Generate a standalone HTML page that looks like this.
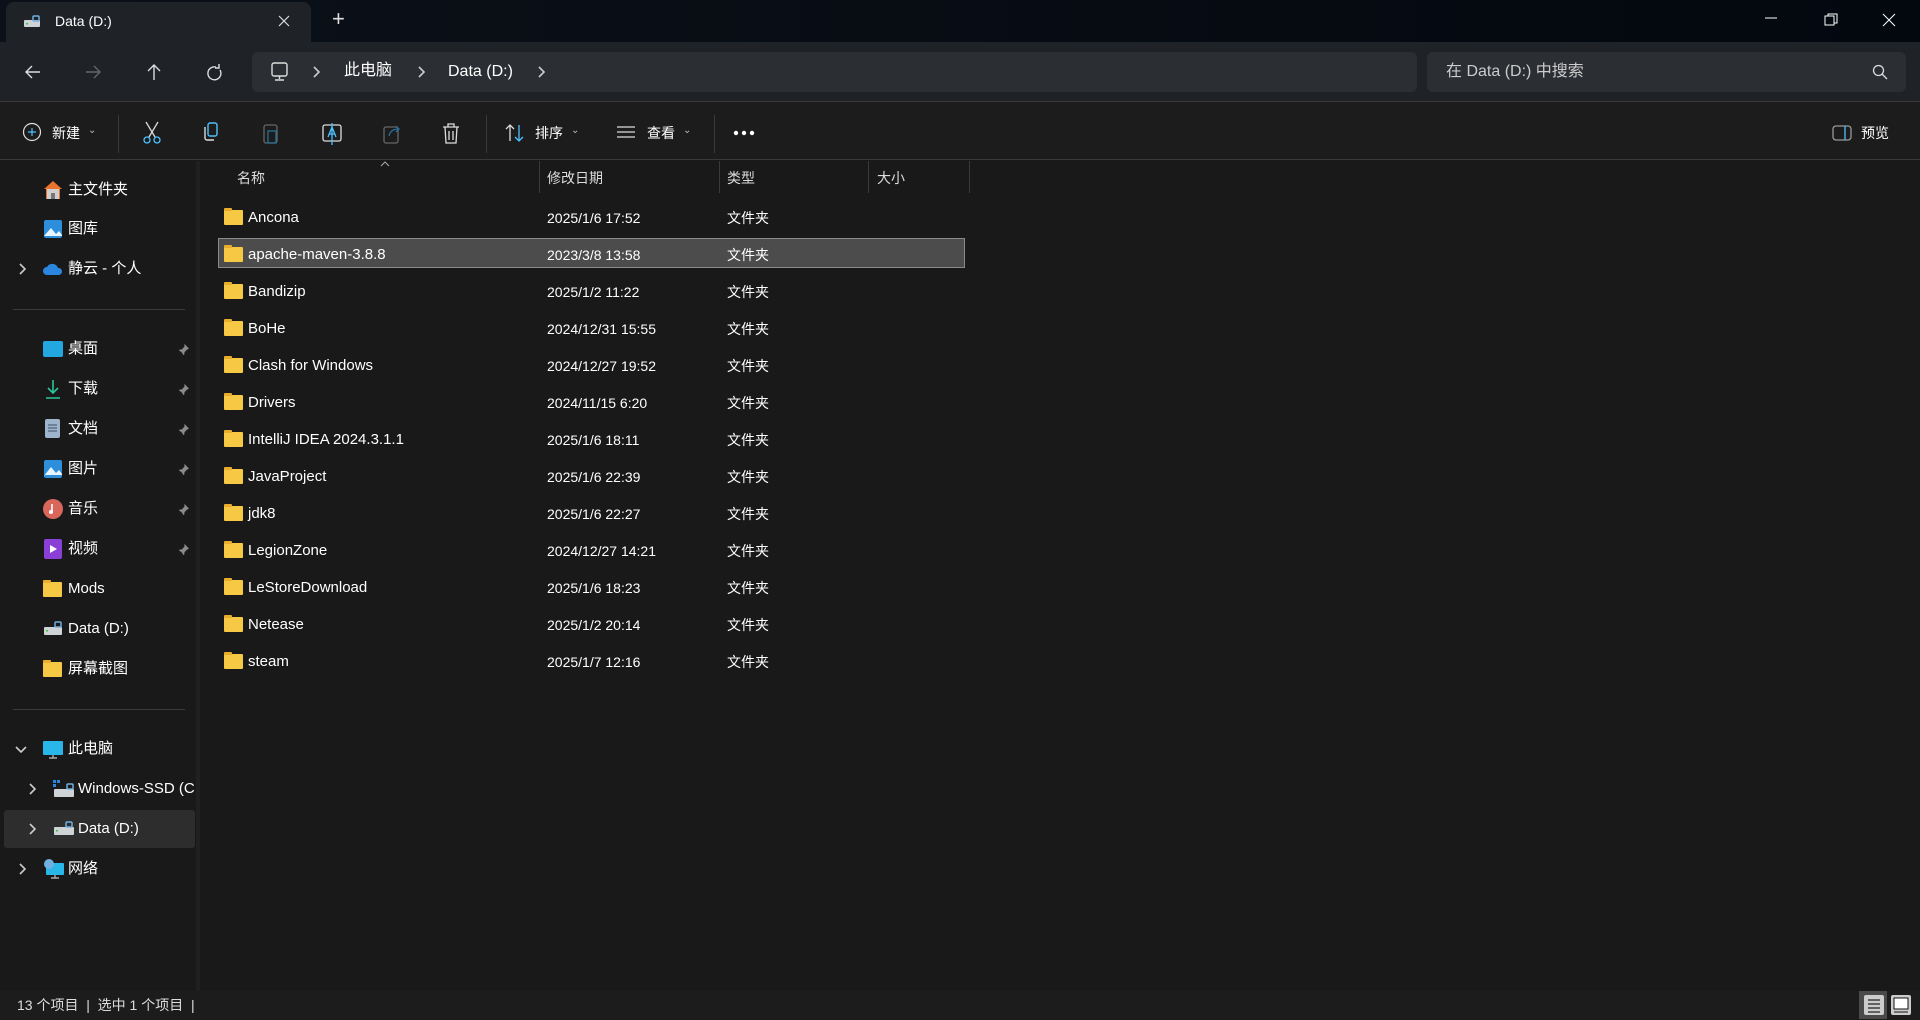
<!DOCTYPE html>
<html><head><meta charset="utf-8"><style>
*{margin:0;padding:0;box-sizing:border-box}
body{width:1920px;height:1020px;background:#191919;font-family:"Liberation Sans","Noto Sans CJK SC",sans-serif;color:#fff;position:relative;overflow:hidden;font-size:15px}
.abs{position:absolute}
.tabbar{left:0;top:0;width:1920px;height:42px;background:linear-gradient(90deg,#0c1119,#03080f)}
.tab{left:6px;top:2px;width:305px;height:40px;background:#1f2227;border-radius:8px 8px 0 0}
.addr{left:0;top:42px;width:1920px;height:60px;background:#1f2227;border-bottom:1px solid #3a3a3a}
.box{background:#2b2e33;border-radius:6px}
.tool{left:0;top:102px;width:1920px;height:58px;background:#1c1c1c;border-bottom:1px solid #3a3a3a}
.t{position:absolute;white-space:nowrap;line-height:20px}
.side{left:0;top:161px;width:196px;height:830px;background:#191919}
.split{left:196px;top:161px;width:4px;height:830px;background:#202020}
.status{left:0;top:991px;width:1920px;height:29px;background:#1c1c1c;color:#ddd;font-size:14px}
.fold{position:absolute;width:19px;height:15px;background:#f7c844;border-radius:1px}
.fold:before{content:"";position:absolute;left:0;top:-2px;width:8px;height:3px;background:#e8ad2a;border-radius:1px 1px 0 0}
.sep{position:absolute;width:1px;background:#3a3a3a}
</style></head><body>
<svg width="0" height="0" style="position:absolute"><defs>
<symbol id="pin" viewBox="0 0 14 14"><path d="M8 1l5 5-2 1-3 3 0 2-1 1-2-3-4 4 4-4-3-2 1-1h2l3-3z" fill="#8a8a8a"/></symbol>
<symbol id="chev" viewBox="0 0 10 14"><path d="M3 2l5 5-5 5" fill="none" stroke="#ccc" stroke-width="1.6"/></symbol>
</defs></svg>
<div class="abs tabbar"></div>
<div class="abs tab"></div>
<svg class="abs" style="left:23px;top:13px" width="18" height="16" viewBox="0 0 18 16"><rect x="1" y="7" width="16" height="7" rx="1" fill="#cfd3d8"/><rect x="10" y="3" width="6" height="5" rx="1" fill="none" stroke="#6fb0e0" stroke-width="1.5"/><rect x="3" y="10" width="2" height="1.5" fill="#3c3"/></svg>
<div class="t" style="left:55px;top:11px;font-size:14px">Data (D:)</div>
<svg class="abs" style="left:278px;top:15px" width="12" height="12" stroke="#ddd" stroke-width="1.2"><path d="M1 1l10 10M11 1L1 11"/></svg>
<div class="t" style="left:332px;top:9px;font-size:22px;color:#ddd;font-weight:300">+</div>
<svg class="abs" style="left:1762px;top:12px" width="150" height="16"><line x1="3" y1="6" x2="15" y2="6" stroke="#fff" stroke-width="1"/><rect x="63" y="4" width="9" height="9" fill="none" stroke="#fff"/><path d="M66 4V2h9v9h-3" fill="none" stroke="#fff"/><path d="M121 2l12 12M133 2l-12 12" stroke="#fff"/></svg>

<div class="abs addr"></div>
<svg class="abs" style="left:24px;top:62px" width="230" height="20" fill="none" stroke="#ddd" stroke-width="1.4"><path d="M2 10h14M8 4l-6 6 6 6"/><path d="M62 10h14M70 4l6 6-6 6" stroke="#666"/><path d="M130 3v15M124 9l6-6 6 6"/><path d="M192 5a6.5 6.5 0 1 0 4 3M195 2v4h-4"/></svg>
<div class="abs box" style="left:252px;top:52px;width:1165px;height:40px"></div>
<svg class="abs" style="left:270px;top:61px" width="20" height="22" fill="none" stroke="#ddd" stroke-width="1.4"><rect x="2" y="2" width="15" height="13" rx="2"/><path d="M9.5 15v3M5 19h9"/></svg>
<svg class="abs" style="left:311px;top:65px" width="10" height="14"><use href="#chev"/></svg>
<div class="t" style="left:344px;top:61px;font-size:16px">此电脑</div>
<svg class="abs" style="left:416px;top:65px" width="10" height="14"><use href="#chev"/></svg>
<div class="t" style="left:448px;top:62px;font-size:16px">Data (D:)</div>
<svg class="abs" style="left:536px;top:65px" width="10" height="14"><use href="#chev"/></svg>
<div class="abs box" style="left:1427px;top:52px;width:479px;height:40px"></div>
<div class="t" style="left:1446px;top:62px;font-size:16px;color:#ccc">在 Data (D:) 中搜索</div>
<svg class="abs" style="left:1872px;top:64px" width="16" height="16" fill="none" stroke="#ddd" stroke-width="1.3"><circle cx="6.5" cy="6.5" r="5"/><path d="M10 10l5 5"/></svg>

<div class="abs tool"></div>
<svg class="abs" style="left:22px;top:122px" width="20" height="20" fill="none" stroke="#ddd" stroke-width="1.2"><circle cx="10" cy="10" r="8.5"/><path d="M10 6v8M6 10h8" stroke="#4cc2ff"/></svg>
<div class="t" style="left:52px;top:123px;font-size:14px">新建</div><div class="t" style="left:88px;top:121px;font-size:10px;color:#bbb">⌄</div>
<div class="sep" style="left:118px;top:115px;height:38px"></div>
<svg class="abs" style="left:140px;top:120px" width="24" height="26" fill="none" stroke-width="1.3"><path d="M6 2l9 15M18 2l-9 15" stroke="#ddd"/><circle cx="7" cy="20" r="3" stroke="#4cc2ff"/><circle cx="17" cy="20" r="3" stroke="#4cc2ff"/></svg>
<svg class="abs" style="left:200px;top:122px" width="24" height="22" fill="none" stroke-width="1.4"><rect x="8" y="1" width="9" height="13" rx="2" stroke="#4cc2ff"/><path d="M5 5v11a2 2 0 0 0 2 2h7" stroke="#ddd"/></svg>
<svg class="abs" style="left:261px;top:122px" width="20" height="24" fill="none" stroke="#666" stroke-width="1.3"><rect x="3" y="3" width="13" height="18" rx="2"/><rect x="7" y="9" width="8" height="12" stroke="#2a6f98"/></svg>
<svg class="abs" style="left:321px;top:122px" width="24" height="24" fill="none" stroke-width="1.3"><rect x="2" y="3" width="18" height="16" rx="2" stroke="#ddd"/><path d="M7 15l4-10 4 10M8.5 12h5" stroke="#4cc2ff"/><path d="M11 1v22" stroke="#4cc2ff"/></svg>
<svg class="abs" style="left:381px;top:122px" width="24" height="24" fill="none" stroke="#666" stroke-width="1.3"><rect x="3" y="5" width="14" height="16" rx="2"/><path d="M8 14c1-5 5-7 10-7M15 4l3 3-3 3" stroke="#2a6f98"/></svg>
<svg class="abs" style="left:441px;top:122px" width="20" height="24" fill="none" stroke="#ddd" stroke-width="1.3"><path d="M2 5h16M7 5V2h6v3M4 5l1 16h10l1-16M8 9v9M12 9v9"/></svg>
<div class="sep" style="left:486px;top:115px;height:38px"></div>
<svg class="abs" style="left:504px;top:123px" width="22" height="20" fill="none" stroke-width="1.3"><path d="M6 18V2M2 6l4-4 4 4" stroke="#ddd"/><path d="M15 2v16M11 14l4 4 4-4" stroke="#4cc2ff"/></svg>
<div class="t" style="left:535px;top:123px;font-size:14px">排序</div><div class="t" style="left:571px;top:121px;font-size:10px;color:#bbb">⌄</div>
<svg class="abs" style="left:616px;top:125px" width="20" height="16" stroke="#ddd" stroke-width="1.3"><path d="M1 2h18M1 7h18M1 12h18"/></svg>
<div class="t" style="left:647px;top:123px;font-size:14px">查看</div><div class="t" style="left:683px;top:121px;font-size:10px;color:#bbb">⌄</div>
<div class="sep" style="left:714px;top:115px;height:38px"></div>
<svg class="abs" style="left:733px;top:130px" width="22" height="6" fill="#fff"><circle cx="3" cy="3" r="2.2"/><circle cx="11" cy="3" r="2.2"/><circle cx="19" cy="3" r="2.2"/></svg>
<svg class="abs" style="left:1832px;top:125px" width="20" height="16" fill="none" stroke-width="1.3"><rect x="1" y="1" width="18" height="14" rx="3" stroke="#999"/><path d="M13 1v14" stroke="#4cc2ff"/></svg>
<div class="t" style="left:1861px;top:123px;font-size:14px">预览</div>

<div class="abs side"></div>
<div class="abs split"></div>
<svg class="abs" style="left:43px;top:180px" width="20" height="20"><path d="M10 1L1 9h2v10h14V9h2z" fill="#e8742e"/><rect x="4" y="9" width="12" height="10" fill="#cfcfcf"/><rect x="8" y="13" width="4" height="6" fill="#777"/></svg>
<div class="t" style="left:68px;top:180px">主文件夹</div>
<svg class="abs" style="left:43px;top:219px" width="20" height="20"><rect x="1" y="1" width="18" height="18" rx="2" fill="#2d8fdc"/><path d="M1 17l7-8 5 6 3-3 3 4v1H1z" fill="#e8f4ff"/></svg>
<div class="t" style="left:68px;top:219px">图库</div>
<svg class="abs" style="left:17px;top:262px" width="10" height="14"><use href="#chev"/></svg>
<svg class="abs" style="left:43px;top:262px" width="20" height="14"><path d="M4 13a4 4 0 0 1 0-8 6 6 0 0 1 11 1 3.5 3.5 0 0 1 1 7z" fill="#2a86de"/></svg>
<div class="t" style="left:68px;top:259px">静云 - 个人</div>
<div class="abs" style="left:13px;top:309px;width:172px;height:1px;background:#3a3a3a"></div>
<svg class="abs" style="left:43px;top:341px" width="20" height="16"><rect x="0" y="0" width="20" height="16" rx="2" fill="#23a7e0"/></svg>
<div class="t" style="left:68px;top:339px">桌面</div><svg class="abs" style="left:177px;top:343px" width="13" height="13"><use href="#pin"/></svg>
<svg class="abs" style="left:44px;top:379px" width="18" height="20" fill="none" stroke="#2ec49b" stroke-width="1.6"><path d="M9 1v13M4 9l5 5 5-5M2 19h14"/></svg>
<div class="t" style="left:68px;top:379px">下载</div><svg class="abs" style="left:177px;top:383px" width="13" height="13"><use href="#pin"/></svg>
<svg class="abs" style="left:45px;top:419px" width="16" height="20"><rect x="0" y="0" width="15" height="19" rx="2" fill="#9eb4cc"/><path d="M3 6h9M3 9h9M3 12h9" stroke="#3b4f66"/></svg>
<div class="t" style="left:68px;top:419px">文档</div><svg class="abs" style="left:177px;top:423px" width="13" height="13"><use href="#pin"/></svg>
<svg class="abs" style="left:43px;top:459px" width="20" height="20"><rect x="1" y="1" width="18" height="18" rx="2" fill="#2d8fdc"/><path d="M1 17l7-9 5 6 3-3 3 4v1H1z" fill="#e8f4ff"/></svg>
<div class="t" style="left:68px;top:459px">图片</div><svg class="abs" style="left:177px;top:463px" width="13" height="13"><use href="#pin"/></svg>
<svg class="abs" style="left:43px;top:499px" width="20" height="20"><circle cx="10" cy="10" r="10" fill="#d9665a"/><path d="M9 5v8" stroke="#fff" stroke-width="1.6"/><circle cx="8" cy="13" r="2" fill="#fff"/></svg>
<div class="t" style="left:68px;top:499px">音乐</div><svg class="abs" style="left:177px;top:503px" width="13" height="13"><use href="#pin"/></svg>
<svg class="abs" style="left:44px;top:539px" width="18" height="20"><rect x="0" y="0" width="18" height="20" rx="2" fill="#8a3fd6"/><path d="M6 6l7 4-7 4z" fill="#fff"/></svg>
<div class="t" style="left:68px;top:539px">视频</div><svg class="abs" style="left:177px;top:543px" width="13" height="13"><use href="#pin"/></svg>
<div class="fold" style="left:43px;top:582px"></div>
<div class="t" style="left:68px;top:579px">Mods</div>
<svg class="abs" style="left:43px;top:620px" width="20" height="16"><rect x="1" y="7" width="18" height="8" rx="1" fill="#cfd3d8"/><rect x="12" y="2" width="6" height="5" rx="1" fill="none" stroke="#6fb0e0" stroke-width="1.5"/><rect x="3" y="10" width="2" height="1.5" fill="#3c3"/></svg>
<div class="t" style="left:68px;top:619px">Data (D:)</div>
<div class="fold" style="left:43px;top:662px"></div>
<div class="t" style="left:68px;top:659px">屏幕截图</div>
<div class="abs" style="left:13px;top:709px;width:172px;height:1px;background:#3a3a3a"></div>
<svg class="abs" style="left:14px;top:745px" width="14" height="10"><path d="M2 2l5 5 5-5" fill="none" stroke="#ccc" stroke-width="1.6"/></svg>
<svg class="abs" style="left:43px;top:741px" width="20" height="18"><rect x="0" y="0" width="20" height="14" rx="1" fill="#29b6e8"/><path d="M6 17h8M10 14v3" stroke="#aaa" stroke-width="1.4"/></svg>
<div class="t" style="left:68px;top:739px">此电脑</div>
<svg class="abs" style="left:27px;top:782px" width="10" height="14"><use href="#chev"/></svg>
<svg class="abs" style="left:53px;top:780px" width="22" height="18"><rect x="0" y="0" width="3" height="3" fill="#2a86de"/><rect x="4" y="0" width="3" height="3" fill="#2a86de"/><rect x="0" y="4" width="3" height="3" fill="#2a86de"/><rect x="1" y="9" width="20" height="8" rx="1" fill="#cfd3d8"/><rect x="14" y="4" width="6" height="5" rx="1" fill="none" stroke="#6fb0e0" stroke-width="1.5"/></svg>
<div class="t" style="left:78px;top:779px;width:117px;overflow:hidden">Windows-SSD (C:)</div>
<div class="abs" style="left:4px;top:810px;width:191px;height:38px;background:#2d2d2d;border-radius:3px"></div>
<svg class="abs" style="left:27px;top:822px" width="10" height="14"><use href="#chev"/></svg>
<svg class="abs" style="left:53px;top:820px" width="22" height="16"><rect x="1" y="7" width="20" height="8" rx="1" fill="#cfd3d8"/><rect x="13" y="2" width="6" height="5" rx="1" fill="none" stroke="#6fb0e0" stroke-width="1.5"/><rect x="3" y="10" width="2" height="1.5" fill="#3c3"/></svg>
<div class="t" style="left:78px;top:819px">Data (D:)</div>
<svg class="abs" style="left:17px;top:862px" width="10" height="14"><use href="#chev"/></svg>
<svg class="abs" style="left:43px;top:859px" width="22" height="20"><rect x="3" y="4" width="18" height="12" rx="1" fill="#29b6e8"/><circle cx="6" cy="5" r="5" fill="#6fb0e0"/><path d="M8 19h8M12 16v3" stroke="#aaa" stroke-width="1.4"/></svg>
<div class="t" style="left:68px;top:859px">网络</div>

<!-- headers -->
<svg class="abs" style="left:380px;top:161px" width="10" height="6"><path d="M1 5l4-4 4 4" fill="none" stroke="#aaa"/></svg>
<div class="t" style="left:237px;top:168px;font-size:14px;color:#ddd">名称</div>
<div class="sep" style="left:539px;top:161px;height:32px"></div>
<div class="t" style="left:547px;top:168px;font-size:14px;color:#ddd">修改日期</div>
<div class="sep" style="left:719px;top:161px;height:32px"></div>
<div class="t" style="left:727px;top:168px;font-size:14px;color:#ddd">类型</div>
<div class="sep" style="left:868px;top:161px;height:32px"></div>
<div class="t" style="left:877px;top:168px;font-size:14px;color:#ddd">大小</div>
<div class="sep" style="left:969px;top:161px;height:32px"></div>

<div class="abs" style="left:218px;top:238px;width:747px;height:30px;background:#4c4c4c;border:1px solid #8a8a8a"></div>
<div style="position:absolute;left:0;top:0">
<div class="fold" style="left:224px;top:210px"></div><div class="t" style="left:248px;top:208px">Ancona</div><div class="t" style="left:547px;top:208px;font-size:14px">2025/1/6 17:52</div><div class="t" style="left:727px;top:208px;font-size:14px">文件夹</div>
<div class="fold" style="left:224px;top:247px"></div><div class="t" style="left:248px;top:245px">apache-maven-3.8.8</div><div class="t" style="left:547px;top:245px;font-size:14px">2023/3/8 13:58</div><div class="t" style="left:727px;top:245px;font-size:14px">文件夹</div>
<div class="fold" style="left:224px;top:284px"></div><div class="t" style="left:248px;top:282px">Bandizip</div><div class="t" style="left:547px;top:282px;font-size:14px">2025/1/2 11:22</div><div class="t" style="left:727px;top:282px;font-size:14px">文件夹</div>
<div class="fold" style="left:224px;top:321px"></div><div class="t" style="left:248px;top:319px">BoHe</div><div class="t" style="left:547px;top:319px;font-size:14px">2024/12/31 15:55</div><div class="t" style="left:727px;top:319px;font-size:14px">文件夹</div>
<div class="fold" style="left:224px;top:358px"></div><div class="t" style="left:248px;top:356px">Clash for Windows</div><div class="t" style="left:547px;top:356px;font-size:14px">2024/12/27 19:52</div><div class="t" style="left:727px;top:356px;font-size:14px">文件夹</div>
<div class="fold" style="left:224px;top:395px"></div><div class="t" style="left:248px;top:393px">Drivers</div><div class="t" style="left:547px;top:393px;font-size:14px">2024/11/15 6:20</div><div class="t" style="left:727px;top:393px;font-size:14px">文件夹</div>
<div class="fold" style="left:224px;top:432px"></div><div class="t" style="left:248px;top:430px">IntelliJ IDEA 2024.3.1.1</div><div class="t" style="left:547px;top:430px;font-size:14px">2025/1/6 18:11</div><div class="t" style="left:727px;top:430px;font-size:14px">文件夹</div>
<div class="fold" style="left:224px;top:469px"></div><div class="t" style="left:248px;top:467px">JavaProject</div><div class="t" style="left:547px;top:467px;font-size:14px">2025/1/6 22:39</div><div class="t" style="left:727px;top:467px;font-size:14px">文件夹</div>
<div class="fold" style="left:224px;top:506px"></div><div class="t" style="left:248px;top:504px">jdk8</div><div class="t" style="left:547px;top:504px;font-size:14px">2025/1/6 22:27</div><div class="t" style="left:727px;top:504px;font-size:14px">文件夹</div>
<div class="fold" style="left:224px;top:543px"></div><div class="t" style="left:248px;top:541px">LegionZone</div><div class="t" style="left:547px;top:541px;font-size:14px">2024/12/27 14:21</div><div class="t" style="left:727px;top:541px;font-size:14px">文件夹</div>
<div class="fold" style="left:224px;top:580px"></div><div class="t" style="left:248px;top:578px">LeStoreDownload</div><div class="t" style="left:547px;top:578px;font-size:14px">2025/1/6 18:23</div><div class="t" style="left:727px;top:578px;font-size:14px">文件夹</div>
<div class="fold" style="left:224px;top:617px"></div><div class="t" style="left:248px;top:615px">Netease</div><div class="t" style="left:547px;top:615px;font-size:14px">2025/1/2 20:14</div><div class="t" style="left:727px;top:615px;font-size:14px">文件夹</div>
<div class="fold" style="left:224px;top:654px"></div><div class="t" style="left:248px;top:652px">steam</div><div class="t" style="left:547px;top:652px;font-size:14px">2025/1/7 12:16</div><div class="t" style="left:727px;top:652px;font-size:14px">文件夹</div>
</div>

<div class="abs status"></div>
<div class="t" style="left:17px;top:995px;font-size:14px;color:#ddd">13 个项目 &nbsp;|&nbsp; 选中 1 个项目 &nbsp;|</div>
<div class="abs" style="left:1859px;top:991px;width:28px;height:28px;background:#4a4a4a"></div>
<svg class="abs" style="left:1864px;top:995px" width="50" height="20"><rect x="0" y="0" width="20" height="20" rx="2" fill="#ccc"/><path d="M4 5h12M4 9h12M4 13h12M4 17h12" stroke="#222" stroke-width="1.3"/><rect x="27" y="0" width="20" height="20" rx="2" fill="#ccc"/><rect x="30" y="3" width="14" height="11" fill="#fff" stroke="#111"/><path d="M30 17h14" stroke="#111"/></svg>
</body></html>
